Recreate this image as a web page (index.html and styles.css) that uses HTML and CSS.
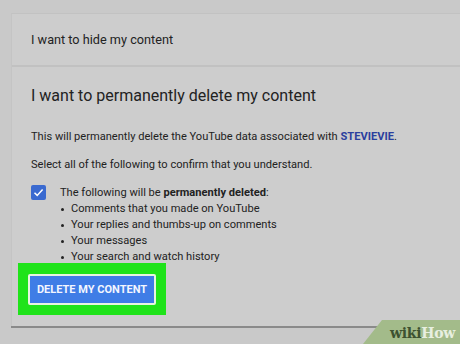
FILE: index.html
```html
<!DOCTYPE html>
<html>
<head>
<meta charset="utf-8">
<link rel="stylesheet" href="styles.css">
</head>
<body>
<div class="card">
  <div class="row-hide">I want to hide my content</div>
  <div class="section">
    <h2 class="title">I want to permanently delete my content</h2>
    <p class="para first">This will permanently delete the YouTube data associated with <a class="chan">STEVIEVIE</a>.</p>
    <p class="para">Select all of the following to confirm that you understand.</p>
    <div class="confirm">
      <span class="check"><svg width="15" height="15" viewBox="0 0 15 15"><path d="M3.5 7.8 L6.2 10.4 L11.6 4.6" fill="none" stroke="#fff" stroke-width="1.5"/></svg></span>
      <div class="confirm-body">
        <div>The following will be <b>permanently deleted</b>:</div>
        <ul class="list">
          <li>Comments that you made on YouTube</li>
          <li>Your replies and thumbs-up on comments</li>
          <li>Your messages</li>
          <li>Your search and watch history</li>
        </ul>
      </div>
    </div>
    <div class="highlight"><button class="btn">DELETE MY CONTENT</button></div>
  </div>
</div>
<div class="wh"><span class="wiki">wiki</span><span class="how">How</span></div>
</body>
</html>
```
FILE: styles.css
```css
html, body { margin: 0; padding: 0; }
body {
  width: 460px; height: 344px; overflow: hidden;
  background: #c9c9c9;
  font-family: Roboto, "Noto Sans", sans-serif;
  color: #222;
  padding: 13px 0 0 11px;
  box-sizing: border-box;
  position: relative;
}
.card {
  width: 470px;
  height: 313px;
  background: #cdcdcd;
  border-top: 1px solid #c2c2c2;
  border-left: 1px solid #c4c4c4;
  box-shadow: 0 2px 0 #8a8a8a;
  box-sizing: border-box;
}
.row-hide {
  height: 53px;
  padding-left: 19px;
  display: flex; align-items: center;
  font-size: 12.7px;
  border-bottom: 2px solid #c1c1c1;
  box-sizing: border-box;
}
.section { padding: 17px 0 0 19px; }
.title { margin: 0; font-weight: 400; font-size: 16px; line-height: 24px; }
.para { margin: 12px 0 0; font-size: 11.1px; line-height: 16px; }
.para.first { margin-top: 21px; }
.chan { color: #2b3f9e; font-weight: 700; }
.confirm { display: flex; margin-top: 12px; font-size: 11.1px; line-height: 16px; }
.check {
  width: 15px; height: 15px; background: #3a6ad0; border-radius: 2px;
  margin-top: 0; flex: none; display: block;
}
.check svg { display: block; }
.confirm-body { margin-left: 14px; }
.list { margin: 0; padding-left: 11px; list-style: none; }
.list li { position: relative; }
.list li::before {
  content: ""; position: absolute; left: -10px; top: 7px;
  width: 3px; height: 3px; border-radius: 50%; background: #222;
}
.highlight {
  margin: -2px 0 0 -13px;
  width: 148px; height: 52px;
  background: #1fe31a;
  display: flex; align-items: center; justify-content: center;
}
.btn {
  width: 128px; height: 31px;
  background: #3f7de6;
  border: 2px solid #e8f4e0;
  border-radius: 2px;
  color: #f4f6ff;
  font-family: Roboto, sans-serif;
  font-weight: 700;
  font-size: 11px;
  padding: 0;
}
.wh {
  position: absolute; right: 0; bottom: 0;
  width: 97px; height: 24px;
  background: #a3bb8a;
  clip-path: polygon(19px 0, 100% 0, 100% 100%, 0 100%);
  font-family: "DejaVu Serif", serif; font-weight: 700; font-size: 14px;
  line-height: 26px; text-align: right; padding-right: 5px; box-sizing: border-box;
  letter-spacing: -0.3px;
}
.wiki { color: #3d5230; }
.how { color: #e8efe0; }
```
